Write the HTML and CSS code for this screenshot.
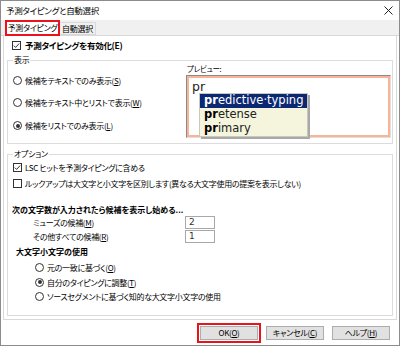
FILE: index.html
```html
<!DOCTYPE html>
<html lang="ja">
<head>
  <meta charset="UTF-8">
  <title>予測タイピングと自動選択</title>
  <link rel="stylesheet" href="styles.css">
</head>
<body>
  <div class="window">
    <div class="titlebar">
      <span class="title">予測タイピングと自動選択</span>
      <svg class="close" width="9" height="9" viewBox="0 0 9 9"><path d="M0.5 0.5 L8.5 8.5 M8.5 0.5 L0.5 8.5" stroke="#222" stroke-width="1"/></svg>
    </div>
    <div class="tabs">
      <div class="tab active">予測タイピング</div>
      <div class="tab">自動選択</div>
    </div>

    <div class="page">
      <div class="enable">
        <svg class="box" width="9" height="9" viewBox="0 0 9 9"><rect x="0.5" y="0.5" width="8" height="8" fill="#fff" stroke="#333"/><path d="M1.8 4.6 L3.6 6.4 L7.2 2.5" fill="none" stroke="#333"/></svg>
        <b>予測タイピングを有効化(E)</b>
      </div>

      <fieldset class="group">
        <legend>表示</legend>
        <div class="display-body">
          <div class="radios">
            <div class="radio-row"><span class="radio"></span><span>候補をテキストでのみ表示(<u>S</u>)</span></div>
            <div class="radio-row"><span class="radio"></span><span>候補をテキスト中とリストで表示(<u>W</u>)</span></div>
            <div class="radio-row"><span class="radio on"></span><span>候補をリストでのみ表示(<u>L</u>)</span></div>
          </div>
          <div class="preview">
            <div class="preview-label">プレビュー:</div>
            <div class="preview-box">
              <div class="preview-inner">
                <span class="typed">pr</span>
                <div class="suggest">
                  <div class="item selected"><b>pr</b>edictive·typing</div>
                  <div class="item"><b>pr</b>etense</div>
                  <div class="item"><b>pr</b>imary</div>
                </div>
              </div>
            </div>
          </div>
        </div>
      </fieldset>

      <fieldset class="group options">
        <legend>オプション</legend>
        <div class="check-row">
          <svg class="box" width="9" height="9" viewBox="0 0 9 9"><rect x="0.5" y="0.5" width="8" height="8" fill="#fff" stroke="#333"/><path d="M1.8 4.6 L3.6 6.4 L7.2 2.5" fill="none" stroke="#333"/></svg>
          <span>LSC ヒットを予測タイピングに含める</span>
        </div>
        <div class="check-row">
          <svg class="box" width="9" height="9" viewBox="0 0 9 9"><rect x="0.5" y="0.5" width="8" height="8" fill="#fff" stroke="#333"/></svg>
          <span>ルックアップは大文字と小文字を区別します(異なる大文字使用の提案を表示しない)</span>
        </div>

        <div class="heading">次の文字数が入力されたら候補を表示し始める...</div>
        <div class="count-row">
          <span class="count-label">ミューズの候補(<u>M</u>)</span>
          <span class="field">2</span>
        </div>
        <div class="count-row">
          <span class="count-label">その他すべての候補(<u>R</u>)</span>
          <span class="field">1</span>
        </div>

        <div class="heading case">大文字小文字の使用</div>
        <div class="case-row first"><span class="radio"></span><span>元の一致に基づく(<u>O</u>)</span></div>
        <div class="case-row"><span class="radio on"></span><span>自分のタイピングに調整(<u>T</u>)</span></div>
        <div class="case-row"><span class="radio"></span><span>ソースセグメントに基づく知的な大文字小文字の使用</span></div>
      </fieldset>
    </div>

    <div class="buttons">
      <button class="btn default">OK(<u>O</u>)</button>
      <button class="btn">キャンセル(<u>C</u>)</button>
      <button class="btn">ヘルプ(<u>H</u>)</button>
    </div>
  </div>
</body>
</html>
```

FILE: styles.css
```css
* {
  box-sizing: border-box;
}
body {
  margin: 0;
  font-family: "Noto Sans CJK JP", sans-serif;
  font-size: 8px;
  letter-spacing: -0.3px;
  font-feature-settings: "palt";
  color: #000;
  background: #fff;
}
u {
  text-decoration-thickness: 1px;
  text-underline-offset: 1px;
}
.window {
  width: 400px;
  height: 346px;
  border: 1px solid #8c8c8c;
  display: flex;
  flex-direction: column;
  background: #fff;
}
.titlebar {
  height: 19px;
  flex: none;
  display: flex;
  align-items: center;
  justify-content: space-between;
  padding: 0 6px 1px 5px;
}
.title {
  line-height: 12px;
  font-size: 8.5px;
}
.tabs {
  height: 16px;
  flex: none;
  display: flex;
  align-items: flex-start;
  padding-left: 4px;
  background: #f0f0f0;
  border-bottom: 1px solid #d9d9d9;
}
.tab {
  width: 36px;
  height: 13px;
  margin-top: 2px;
  line-height: 11px;
  text-align: center;
  white-space: nowrap;
  background: #f0f0f0;
  border: 1px solid #d9d9d9;
  border-left: none;
}
.tab.active {
  width: 55px;
  height: 16px;
  margin-top: 0;
  line-height: 12px;
  background: #fff;
  border: 2px solid #e8141c;
}
.page {
  height: 284px;
  flex: none;
  margin: 0 2px;
  padding: 0 3px;
  border: 1px solid #d9d9d9;
  border-top: none;
}
.enable {
  height: 18px;
  display: flex;
  align-items: center;
  gap: 4px;
  padding-left: 5px;
  font-size: 8.5px;
}
.box {
  flex: none;
}
.group {
  margin: 1px 0 0;
  padding: 0;
  min-width: 0;
  border: 1px solid #dcdcdc;
}
.group legend {
  margin-left: 5px;
  padding: 0 1px;
  line-height: 10px;
}
.display-body {
  display: flex;
  height: 78px;
}
.radios {
  padding: 4px 0 0 5px;
}
.radio-row {
  height: 23px;
  display: flex;
  align-items: center;
  gap: 3px;
  white-space: nowrap;
}
.radio-row:first-child {
  height: 22px;
}
.radio {
  flex: none;
  width: 9px;
  height: 9px;
  border: 1px solid #333;
  border-radius: 50%;
  background: #fff;
  display: flex;
  align-items: center;
  justify-content: center;
}
.radio.on::after {
  content: "";
  width: 4px;
  height: 4px;
  border-radius: 50%;
  background: #333;
}
.preview {
  margin-left: auto;
  margin-right: 1px;
  width: 205px;
}
.preview-label {
  height: 8px;
  line-height: 8px;
  font-size: 7.5px;
  padding-left: 1px;
}
.preview-box {
  margin-top: 2px;
  height: 63px;
  border: 1px solid;
  border-color: #8a8a8a #e0e0e0 #e0e0e0 #8a8a8a;
}
.preview-inner {
  position: relative;
  height: 100%;
  border: 2px solid #f8b494;
  padding: 1px 0 0 3px;
}
.typed {
  font-family: "DejaVu Sans", sans-serif;
  font-size: 12.5px;
  letter-spacing: 0;
  line-height: 15px;
  color: #222;
}
.suggest {
  position: absolute;
  left: 10px;
  top: 15px;
  width: 109px;
  background: #f5f5dd;
  border: 1px solid #c9c9bb;
  box-shadow: 2px 2px 0 #a8a8a8;
  font-family: "DejaVu Sans", sans-serif;
  font-size: 11.5px;
  letter-spacing: 0;
  font-feature-settings: normal;
}
.item {
  height: 14px;
  line-height: 13px;
  padding-left: 4px;
  color: #222;
  white-space: nowrap;
}
.item b {
  color: #000;
}
.item.selected {
  background: #0c2872;
  color: #fff;
}
.item.selected b {
  color: #fff;
}
.options {
  margin-top: 5px;
  padding-bottom: 12px;
}
.check-row {
  height: 16px;
  display: flex;
  align-items: center;
  gap: 3px;
  padding-left: 5px;
  white-space: nowrap;
}
.heading {
  height: 12px;
  line-height: 12px;
  margin-top: 13px;
  padding-left: 4px;
  font-weight: bold;
  letter-spacing: 0;
  white-space: nowrap;
}
.heading.case {
  height: 16px;
  line-height: 16px;
  margin-top: 1px;
  padding-left: 8px;
}
.count-row {
  height: 13px;
  display: flex;
  align-items: center;
  padding-left: 25px;
  white-space: nowrap;
}
.count-row + .count-row {
  margin-top: 1px;
}
.count-label {
  width: 152px;
}
.field {
  width: 30px;
  height: 13px;
  line-height: 11px;
  padding-left: 3px;
  border: 1px solid #a8a8a8;
  font-family: "DejaVu Sans", sans-serif;
  font-size: 9px;
  letter-spacing: 0;
  color: #333;
}
.case-row {
  height: 14px;
  display: flex;
  align-items: center;
  gap: 3px;
  padding-left: 27px;
  white-space: nowrap;
}
.case-row.first {
  height: 15px;
}
.buttons {
  flex: 1;
  display: flex;
  justify-content: flex-end;
  align-items: flex-start;
  gap: 8px;
  padding: 6px 9px 0 0;
}
.btn {
  width: 58px;
  height: 14px;
  padding: 0;
  font: inherit;
  letter-spacing: inherit;
  line-height: 12px;
  color: #000;
  background: #e1e1e1;
  border: 1px solid #adadad;
}
.btn.default {
  outline: 2px solid #e8141c;
  outline-offset: 1px;
}
```
